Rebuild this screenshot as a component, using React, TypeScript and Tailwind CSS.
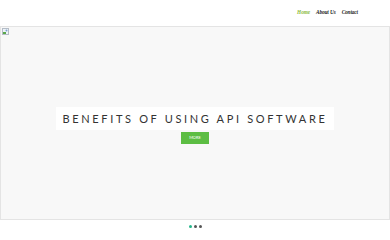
const navItems = [
  { label: "Home", active: true },
  { label: "About Us", active: false },
  { label: "Contact", active: false },
];

function BrokenImage() {
  return (
    <svg width="7" height="7" viewBox="0 0 7 7" className="block">
      <rect x="0.5" y="0.5" width="6" height="6" fill="#eef3f8" stroke="#b4bcc6" strokeWidth="1" />
      <rect x="1" y="4" width="3" height="2" fill="#5aa84a" />
      <circle cx="4.5" cy="2.5" r="1" fill="#7aa0d0" />
    </svg>
  );
}

export default function App() {
  return (
    <div className="w-[390px] h-[240px] bg-white overflow-hidden" style={{ fontFamily: "'Lato', sans-serif" }}>
      <header className="h-[26px] flex items-center justify-end pr-[32px]">
        <nav className="flex gap-[6px] font-['Liberation_Serif',serif] italic font-bold text-[5.3px] tracking-[-0.1px]">
          {navItems.map((item) => (
            <a key={item.label} className={item.active ? "text-[#8dbb3c]" : "text-[#222]"}>
              {item.label}
            </a>
          ))}
        </nav>
      </header>

      <section className="relative h-[194px] border border-[#e4e4e4] bg-[#f8f8f8]">
        <div className="absolute left-[1px] top-[1px]">
          <BrokenImage />
        </div>
        <div className="flex flex-col items-center pt-[80px]">
          <div className="bg-white px-[7px] py-[4px]">
            <h1 className="text-[11px] leading-[15px] tracking-[2.65px] text-[#333] font-normal uppercase">
              Benefits of Using API Software
            </h1>
          </div>
          <button className="mt-[2px] w-[28px] h-[12px] bg-[#5cbd43] text-white text-[4px] leading-none">
            MORE
          </button>
        </div>
      </section>

      <div className="flex justify-center gap-[2px] pt-[5px]">
        <span className="w-[3px] h-[3px] rounded-full bg-[#23b68a]" />
        <span className="w-[3px] h-[3px] rounded-full bg-[#555]" />
        <span className="w-[3px] h-[3px] rounded-full bg-[#555]" />
      </div>
    </div>
  );
}
